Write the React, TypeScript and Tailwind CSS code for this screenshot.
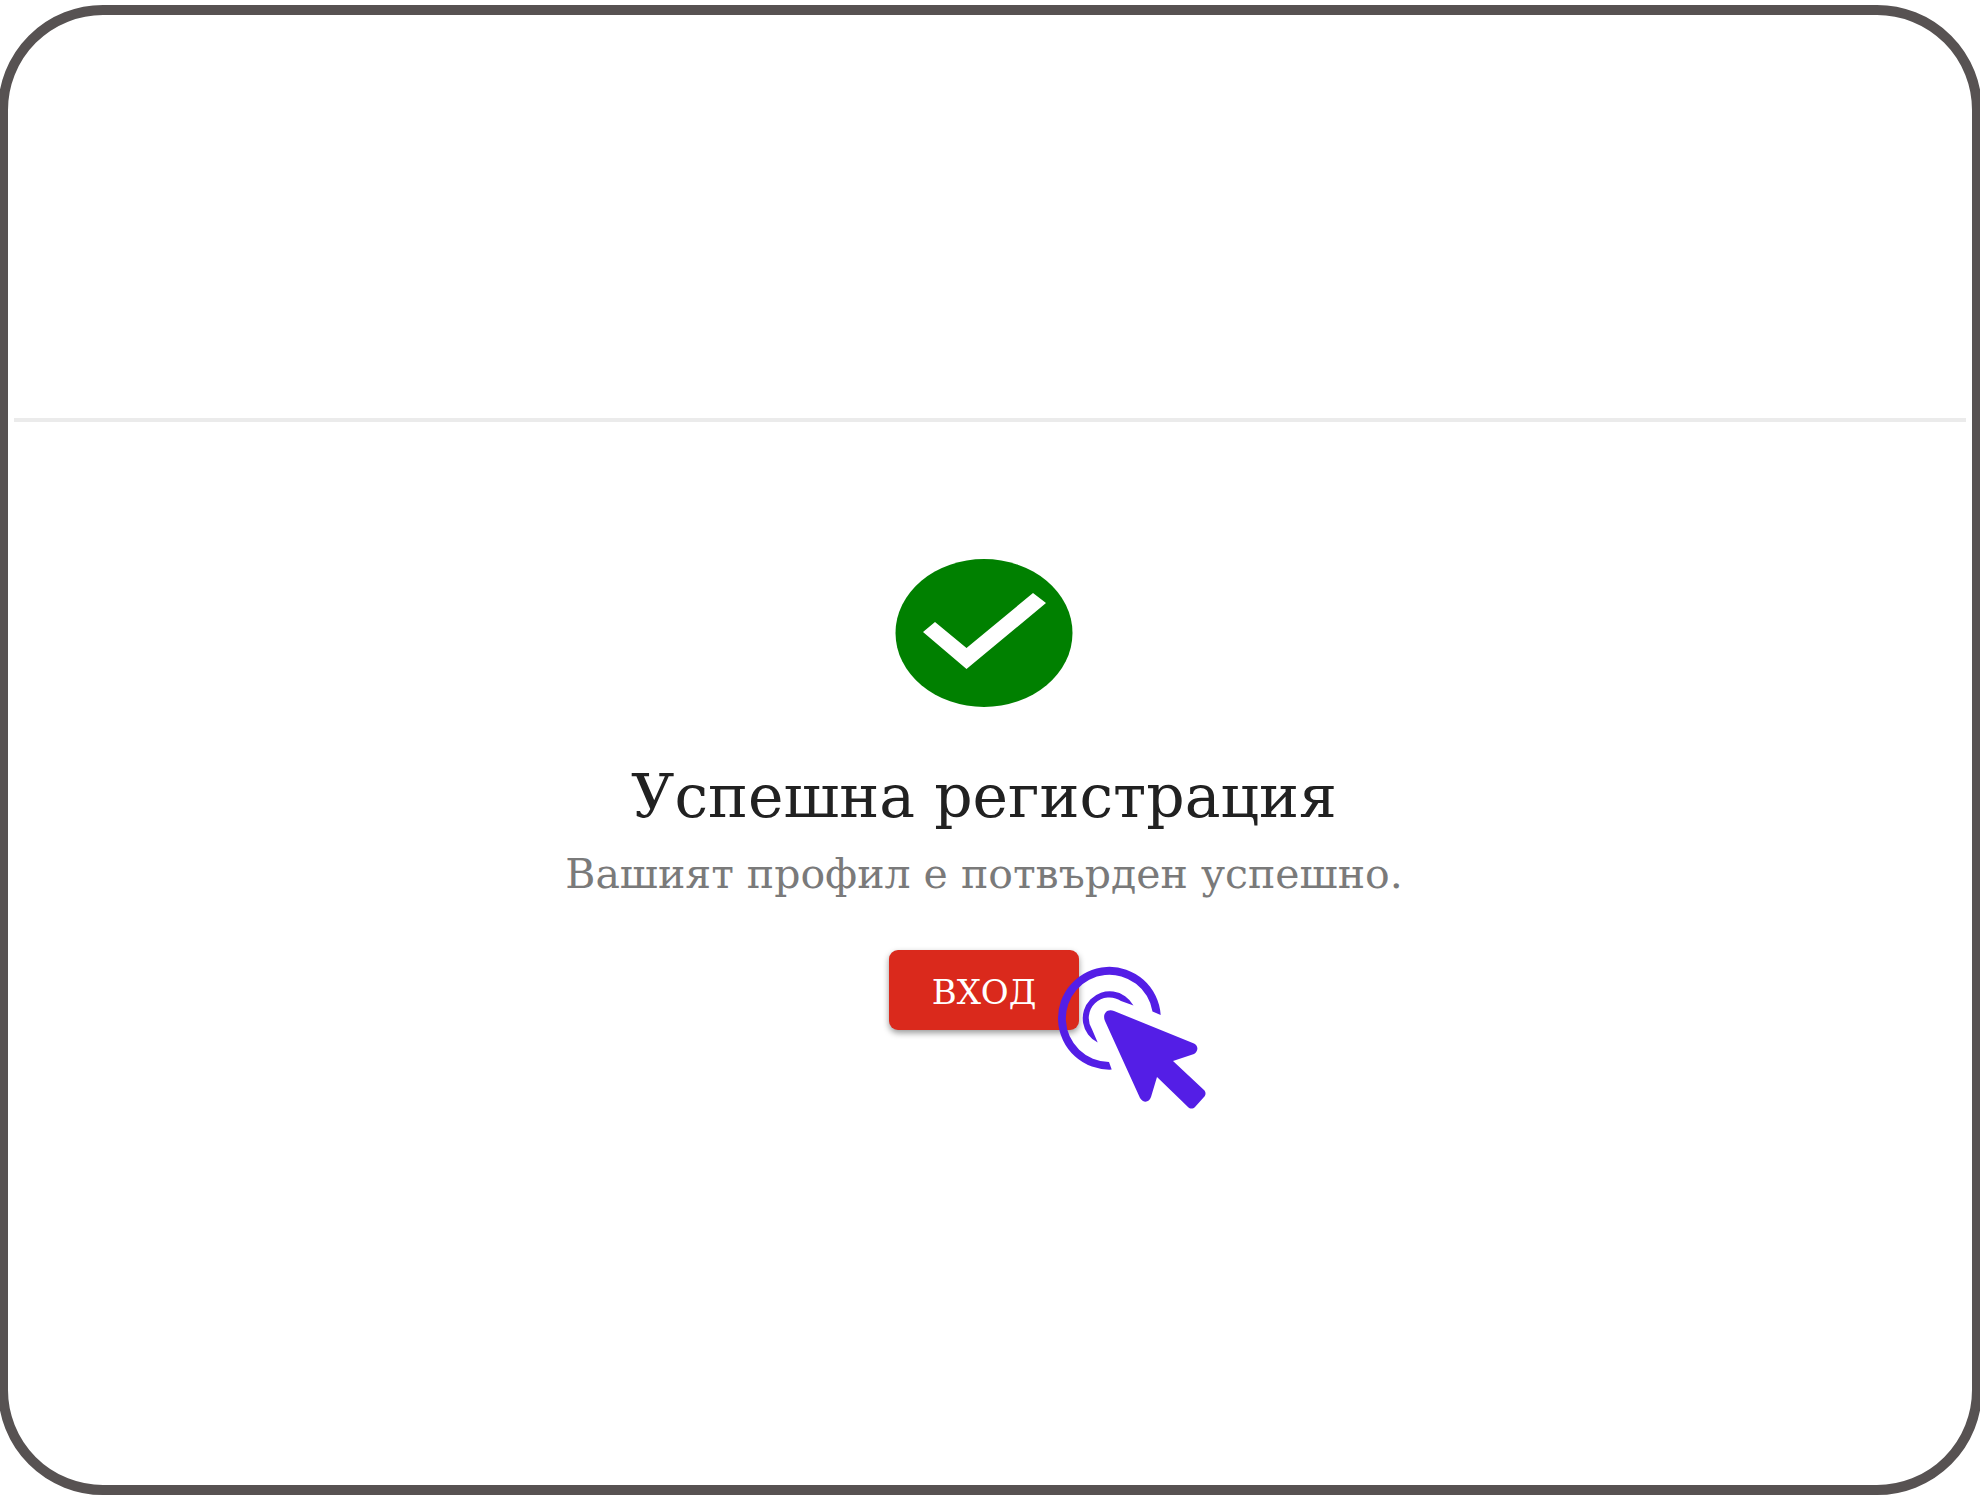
import React from 'react';

const CheckBadge: React.FC = () => (
  <svg className="w-[178px] h-[150px]" viewBox="0 0 178 150" aria-hidden="true">
    <ellipse cx="89" cy="75" rx="88.500" ry="74" fill="#008000" />
    <path d="M28 74 L40 64 L71.500 90 L138 35 L151 45 L71.500 111 Z" fill="#fff" />
  </svg>
);

const ClickPointer: React.FC = () => (
  <svg
    className="absolute left-[169px] top-[16px] w-[152px] h-[144px] pointer-events-none"
    viewBox="0 0 152 144"
    aria-hidden="true"
  >
    <g fill="#541ee6">
      {/* click rings */}
      <path d="M102.700 49 A51.400 51.400 0 1 0 53.700 103.600 L51 96 A43.600 43.600 0 1 1 94.500 45.500 Z" />
      <path d="M75.500 39.500 A27 27 0 1 0 39.700 76.500 L34 63.300 A20.700 20.700 0 0 1 63 35 Z" />
      {/* arrow */}
      <path d="M56 45 L136 77.500 C141 80 140 86 136 88 L115 95 L146 124 C148 126 148 129 146 131 L137 141 C135 143 132 143 130 141 L99 111 L93 131 C91 137 85 137 82 132 L47 55 C44 48 49 42 56 45 Z" />
    </g>
  </svg>
);

export default function App() {
  return (
    <div className="min-h-screen flex flex-col overflow-hidden bg-white py-[5px]" lang="bg">
      <main className="flex-1 flex flex-col -mx-[2px] rounded-[105px] border-[10px] border-[#575252] bg-white font-['DejaVu_Serif',serif]">
        <header className="mx-[6px] h-[407px] border-b-4 border-[#ebebeb]" />

        <section className="flex flex-col items-center pt-[136px] pr-[12px] text-center">
          <CheckBadge />
          <h1 className="mt-[48px] text-[60px] leading-[80px] text-[#212121]">
            Успешна регистрация
          </h1>
          <p className="mt-[14px] text-[41px] leading-[48px] text-[#7a7a7a]">
            Вашият профил е потвърден успешно.
          </p>
          <div className="relative mt-[52px]">
            <button
              type="button"
              className="block w-[190px] h-[80px] rounded-[9px] bg-[#da291c] pt-1 text-[34px] text-white shadow-[0_3px_6px_rgba(0,0,0,0.4)]"
            >
              ВХОД
            </button>
            <ClickPointer />
          </div>
        </section>
      </main>
    </div>
  );
}
